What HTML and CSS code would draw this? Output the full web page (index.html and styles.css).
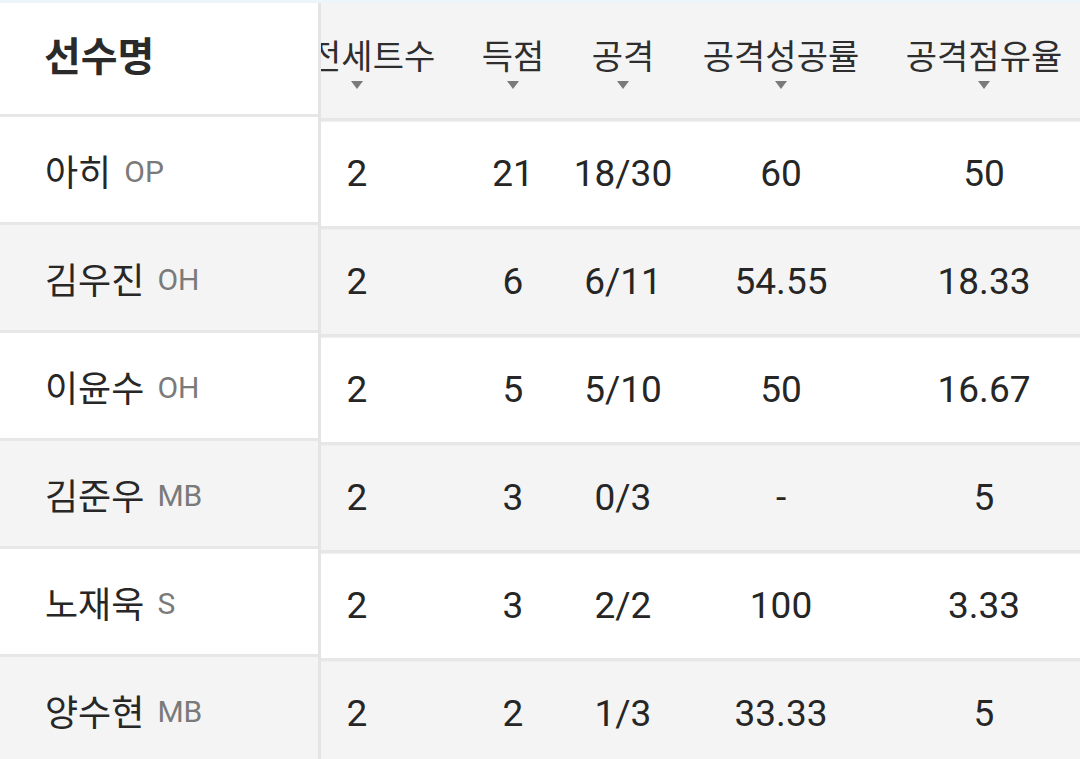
FILE: index.html
```html
<!DOCTYPE html>
<html lang="ko">
<head>
<meta charset="utf-8">
<link rel="stylesheet" href="styles.css">
</head>
<body>
<div class="topbar"></div>
<div class="board">
  <div class="fixed">
    <div class="fhead">선수명</div>
    <div class="frow"><span class="name">아히</span><span class="pos">OP</span></div>
    <div class="frow alt"><span class="name">김우진</span><span class="pos">OH</span></div>
    <div class="frow"><span class="name">이윤수</span><span class="pos">OH</span></div>
    <div class="frow alt"><span class="name">김준우</span><span class="pos">MB</span></div>
    <div class="frow"><span class="name">노재욱</span><span class="pos">S</span></div>
    <div class="frow alt"><span class="name">양수현</span><span class="pos">MB</span></div>
  </div>
  <div class="scroller" id="scroller">
    <div class="srow shead">
      <div class="hcell"><span class="htext">출전세트수</span><span class="arrow"></span></div>
      <div class="hcell"><span class="htext">득점</span><span class="arrow"></span></div>
      <div class="hcell"><span class="htext">공격</span><span class="arrow"></span></div>
      <div class="hcell"><span class="htext">공격성공률</span><span class="arrow"></span></div>
      <div class="hcell"><span class="htext">공격점유율</span><span class="arrow"></span></div>
    </div>
    <div class="srow"><div class="cell">2</div><div class="cell">21</div><div class="cell">18/30</div><div class="cell">60</div><div class="cell">50</div></div>
    <div class="srow alt"><div class="cell">2</div><div class="cell">6</div><div class="cell">6/11</div><div class="cell">54.55</div><div class="cell">18.33</div></div>
    <div class="srow"><div class="cell">2</div><div class="cell">5</div><div class="cell">5/10</div><div class="cell">50</div><div class="cell">16.67</div></div>
    <div class="srow alt"><div class="cell">2</div><div class="cell">3</div><div class="cell">0/3</div><div class="cell">-</div><div class="cell">5</div></div>
    <div class="srow"><div class="cell">2</div><div class="cell">3</div><div class="cell">2/2</div><div class="cell">100</div><div class="cell">3.33</div></div>
    <div class="srow alt"><div class="cell">2</div><div class="cell">2</div><div class="cell">1/3</div><div class="cell">33.33</div><div class="cell">5</div></div>
  </div>
</div>
<script src="script.js"></script>
</body>
</html>
```
FILE: styles.css
```css
html, body {
  margin: 0;
  padding: 0;
  background: #ffffff;
  overflow: hidden;
}
body {
  width: 1080px;
  height: 759px;
  font-family: Roboto, "Noto Sans CJK KR", sans-serif;
  color: #262626;
}
.topbar {
  height: 3px;
  background: #ecf5fa;
}
.board {
  display: flex;
  align-items: flex-start;
}
.fixed {
  width: 318px;
  flex: none;
}
.fhead {
  height: 111px;
  box-sizing: border-box;
  display: flex;
  align-items: center;
  padding-left: 44px;
  padding-bottom: 10px;
  font-family: "Noto Sans CJK KR", sans-serif;
  font-weight: 700;
  font-size: 40px;
  color: #2a2a2a;
  border-bottom: 3px solid #e7e7e7;
  background: #ffffff;
  height: 114px;
}
.frow {
  height: 105px;
  display: flex;
  align-items: center;
  padding-left: 45px;
  border-bottom: 3px solid #e7e7e7;
  background: #ffffff;
}
.frow.alt, .srow.alt {
  background: #f4f4f4;
}
.name {
  font-family: "Noto Sans CJK KR", sans-serif;
  font-size: 36px;
  color: #272727;
}
.pos {
  margin-left: 13px;
  font-size: 30px;
  color: #7a7a7a;
  padding-top: 3px;
}
.scroller {
  flex: 1;
  min-width: 0;
  overflow: hidden;
  border-left: 3px solid #e4e4e4;
  position: relative;
  scrollbar-width: none;
}
.srow {
  display: grid;
  grid-template-columns: 222px 90px 130px 186px 220px;
  width: 848px;
  height: 105px;
  border-bottom: 3px solid #e7e7e7;
  background: #ffffff;
  box-shadow: inset 0 1px 0 #efefef;
}
.srow.shead {
  height: 115px;
  background: #f4f4f4;
  box-shadow: none;
}
.hcell {
  display: flex;
  flex-direction: column;
  align-items: center;
  padding-top: 31px;
}
.htext {
  font-family: "Noto Sans CJK KR", sans-serif;
  font-size: 34px;
  line-height: 42px;
  color: #2e2e2e;
  white-space: nowrap;
}
.arrow {
  margin-top: 5px;
  width: 0;
  height: 0;
  border-left: 6px solid transparent;
  border-right: 6px solid transparent;
  border-top: 8px solid #7a7a7a;
}
.cell {
  display: flex;
  align-items: center;
  justify-content: center;
  font-size: 37px;
  color: #262626;
  white-space: nowrap;
}
.scroller::after {
  content: "";
  position: absolute;
  top: 0;
  bottom: 0;
  left: 0;
  width: 14px;
  background: linear-gradient(to right, rgba(0,0,0,0.05), rgba(0,0,0,0));
  pointer-events: none;
}
```
FILE: script.js
```js
document.getElementById('scroller').scrollLeft = 75;
```
